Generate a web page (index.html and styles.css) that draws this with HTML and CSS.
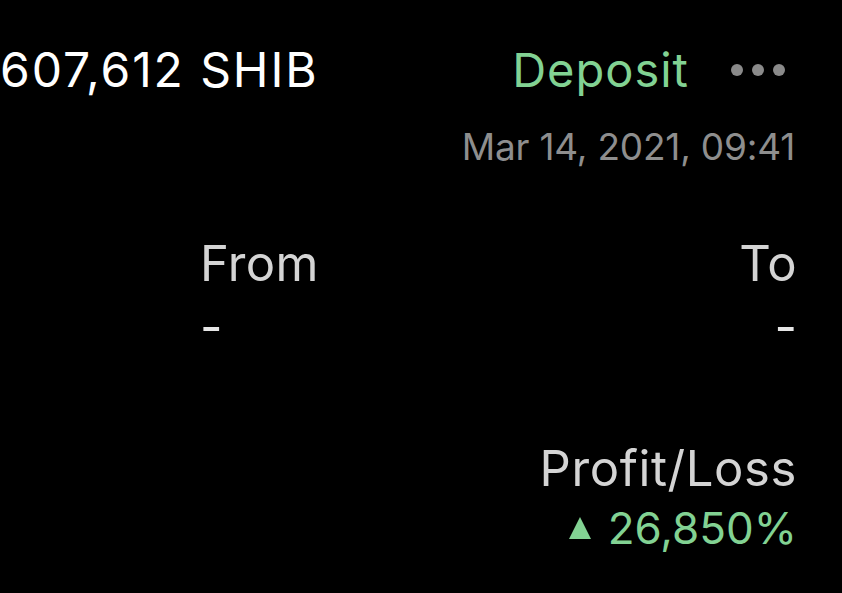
FILE: index.html
```html
<!DOCTYPE html>
<html lang="en">
<head>
	<meta charset="UTF-8">
	<meta name="viewport" content="width=device-width, initial-scale=1.0">
	<link rel="stylesheet" href="styles.css">
</head>
<body>
	<div class="screen">
		<div class="top-row">
			<div class="amount">607,612 SHIB</div>
			<div class="actions">
				<span class="type">Deposit</span>
				<span class="more"><i></i><i></i><i></i></span>
			</div>
		</div>
		<div class="date">Mar 14, 2021, 09:41</div>

		<div class="route">
			<div class="col">
				<div class="label">From</div>
				<div class="value">-</div>
			</div>
			<div class="col right">
				<div class="label">To</div>
				<div class="value">-</div>
			</div>
		</div>

		<div class="pnl">
			<div class="label wide">Profit/Loss</div>
			<div class="gain"><span class="arrow"></span>26,850%</div>
		</div>
	</div>
</body>
</html>
```

FILE: styles.css
```css
* {
	margin: 0;
	padding: 0;
	box-sizing: border-box;
}

html, body {
	background: #000;
	height: 100%;
	overflow: hidden;
}

body {
	font-family: Inter, "Noto Sans", sans-serif;
	font-weight: 380;
}

.screen {
	padding: 40px 45px 0 0;
}

.top-row {
	display: flex;
	justify-content: space-between;
	align-items: center;
	height: 60px;
}

.amount {
	color: #fff;
	font-size: 48px;
	line-height: 60px;
	letter-spacing: 1.9px;
}

.actions {
	display: flex;
	align-items: center;
}

.type {
	color: #82d293;
	font-size: 47px;
	line-height: 60px;
	letter-spacing: 1px;
}

.more {
	display: flex;
	gap: 9px;
	margin-left: 42px;
	margin-right: 12px;
}

.more i {
	width: 12px;
	height: 12px;
	border-radius: 50%;
	background: #8a8a8a;
}

.date {
	text-align: right;
	color: #8e8e8e;
	font-size: 37px;
	line-height: 44px;
	letter-spacing: -0.2px;
	margin-top: 25px;
	margin-right: 2px;
}

.route {
	display: flex;
	justify-content: space-between;
	padding-left: 200px;
	margin-top: 65px;
}

.col.right {
	text-align: right;
}

.label {
	color: #d4d4d4;
	font-size: 49px;
	line-height: 60px;
	letter-spacing: 0.3px;
}

.label.wide {
	letter-spacing: 0.6px;
}

.value {
	color: #e6e6e6;
	font-size: 49px;
	line-height: 60px;
	position: relative;
	top: 3px;
}

.pnl {
	text-align: right;
	margin-top: 85px;
}

.gain {
	color: #82d293;
	font-size: 44px;
	line-height: 52px;
	margin-top: 3px;
	display: flex;
	justify-content: flex-end;
	align-items: center;
}

.arrow {
	width: 0;
	height: 0;
	border-left: 11px solid transparent;
	border-right: 11px solid transparent;
	border-bottom: 22px solid #82d293;
	margin-right: 17px;
}
```
